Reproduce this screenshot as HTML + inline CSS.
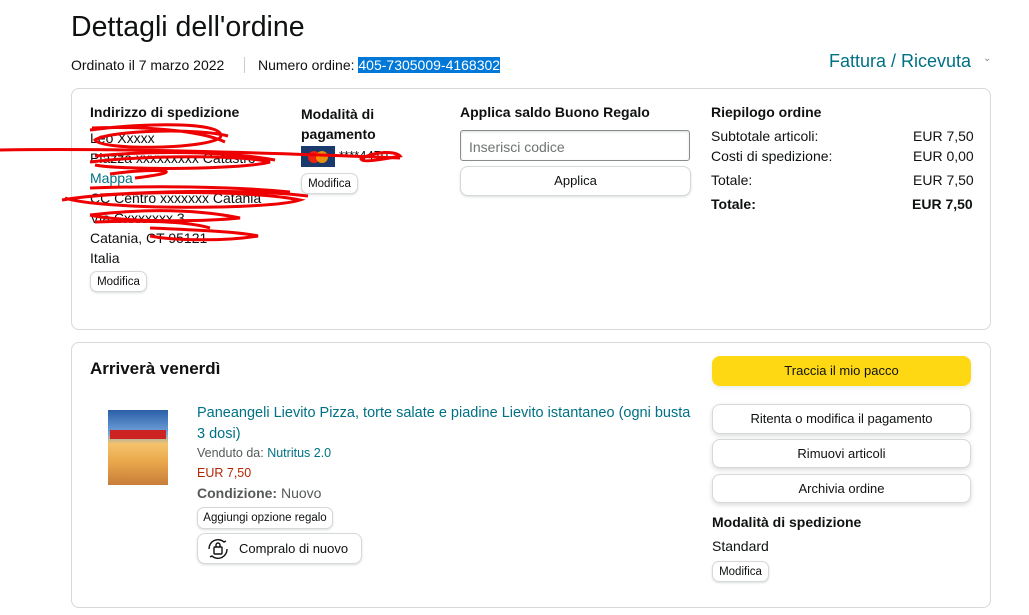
<!DOCTYPE html>
<html><head><meta charset="utf-8"><style>
*{margin:0;padding:0;box-sizing:border-box}
body{width:1029px;height:615px;background:#fff;font-family:"Liberation Sans",sans-serif;color:#0f1111;position:relative;overflow:hidden;font-size:14px}
.a{position:absolute;white-space:nowrap}
.b{font-weight:bold}
.box{position:absolute;border:1px solid #d5d9d9;border-radius:8px}
.btn{position:absolute;border:1px solid #d5d9d9;border-radius:7px;background:#fff;box-shadow:0 1px 2px rgba(15,17,17,.15);font-size:11.5px;text-align:center}
.bb{position:absolute;border:1px solid #d5d9d9;border-radius:8px;background:#fff;box-shadow:0 2px 5px rgba(15,17,17,.15);font-size:13px;text-align:center;line-height:27px;left:712px;width:259px}
.l{color:#007185}
</style></head><body>
<div class="a" style="left:71px;top:11px;font-size:28.5px">Dettagli dell'ordine</div>
<div class="a" style="left:71px;top:57px;font-size:14px">Ordinato il 7 marzo 2022</div>
<div class="a" style="left:244px;top:57px;width:1px;height:16px;background:#ccc"></div>
<div class="a" style="left:258px;top:57px;font-size:14px">Numero ordine: <span style="background:#0078d7;color:#fff">405-7305009-4168302</span></div>
<div class="a l" style="left:829px;top:51px;font-size:18px">Fattura / Ricevuta</div>
<div class="a" style="left:983px;top:53px;font-size:10px;color:#888">⌄</div>

<div class="box" style="left:71px;top:88px;width:920px;height:242px"></div>
<div class="a b" style="left:90px;top:104px">Indirizzo di spedizione</div>
<div class="a" style="left:90px;top:128px;line-height:20px">Leo Xxxxx<br>Piazza xxxxxxxxx Catastro<br><span class="l">Mappa</span><br>CC Centro xxxxxxx Catania<br>Via Cxxxxxxx 3<br>Catania, CT 95121<br>Italia</div>
<div class="btn" style="left:90px;top:271px;width:57px;height:21px;line-height:20px">Modifica</div>
<div class="a b" style="left:301px;top:104px;line-height:20px">Modalità di<br>pagamento</div>
<div class="a" style="left:301px;top:146px;width:34px;height:21px;background:#1a3a6e"><div style="position:absolute;left:7px;top:5px;width:12px;height:12px;border-radius:50%;background:#e21"></div><div style="position:absolute;left:15px;top:5px;width:12px;height:12px;border-radius:50%;background:#f90;opacity:.9"></div></div>
<div class="a" style="left:339px;top:148px;font-size:13px">****4470</div>
<div class="btn" style="left:301px;top:173px;width:57px;height:21px;line-height:20px">Modifica</div>
<div class="a b" style="left:460px;top:104px">Applica saldo Buono Regalo</div>
<div class="a" style="left:460px;top:130px;width:230px;height:31px;border:1px solid #888c8c;border-radius:3px;box-shadow:inset 0 1px 2px rgba(15,17,17,.15);color:#6f7373;padding:8px;font-size:14px">Inserisci codice</div>
<div class="btn" style="left:460px;top:166px;width:231px;height:30px;line-height:28px;font-size:13px;border-radius:8px">Applica</div>
<div class="a b" style="left:711px;top:104px">Riepilogo ordine</div>
<div class="a" style="left:711px;top:128px">Subtotale articoli:</div><div class="a" style="left:913px;top:128px">EUR 7,50</div>
<div class="a" style="left:711px;top:148px">Costi di spedizione:</div><div class="a" style="left:913px;top:148px">EUR 0,00</div>
<div class="a" style="left:711px;top:172px">Totale:</div><div class="a" style="left:913px;top:172px">EUR 7,50</div>
<div class="a b" style="left:711px;top:196px">Totale:</div><div class="a b" style="left:912px;top:196px">EUR 7,50</div>

<svg class="a" style="left:0;top:0" width="450" height="260" fill="none" stroke="#e00" stroke-width="3">
<path d="M90 130 C150 122 230 122 220 138 C200 150 100 150 95 140 C110 130 200 128 228 136 M92 128 C140 126 200 130 225 142"/>
<path d="M0 150 C100 148 250 152 400 158 M90 162 C150 155 240 155 270 162 C240 170 120 170 95 165 M95 156 C160 150 230 152 275 160"/>
<path d="M110 174 C150 168 200 170 135 178 M62 200 C120 190 250 190 300 200 C270 210 100 210 65 198 M100 195 C180 190 260 190 308 196 M90 188 C150 186 230 186 290 192"/>
<path d="M90 215 C150 208 200 210 240 218 C200 222 120 222 90 215 M95 222 C150 220 190 222 210 228 M150 228 C200 230 240 232 258 236 C220 242 170 240 150 236"/>
<path d="M360 160 C370 152 395 150 400 156 C380 160 365 162 362 160"/>
</svg>

<div class="box" style="left:71px;top:342px;width:920px;height:266px"></div>
<div class="a b" style="left:90px;top:359px;font-size:17px">Arriverà venerdì</div>
<div class="a" style="left:108px;top:410px;width:60px;height:75px;background:linear-gradient(#2a5fa8 0,#6fa0d8 30%,#f4c36b 45%,#e9a64a 70%,#c77d3a 100%)"><div style="position:absolute;left:2px;top:20px;width:56px;height:9px;background:#c22"></div></div>
<div class="a l" style="left:197px;top:403px;font-size:14.5px;line-height:21px;white-space:normal;width:500px">Paneangeli Lievito Pizza, torte salate e piadine Lievito istantaneo (ogni busta 3 dosi)</div>
<div class="a" style="left:197px;top:446px;font-size:12.5px;color:#565959">Venduto da: <span class="l">Nutritus 2.0</span></div>
<div class="a" style="left:197px;top:466px;font-size:12.5px;color:#b12704">EUR 7,50</div>
<div class="a" style="left:197px;top:485px;font-size:14px;color:#565959"><b>Condizione:</b> Nuovo</div>
<div class="btn" style="left:197px;top:507px;width:136px;height:22px;line-height:21px">Aggiungi opzione regalo</div>
<div class="btn" style="left:197px;top:533px;width:165px;height:31px;line-height:29px;font-size:13px;border-radius:8px;text-align:left;padding-left:41px">Compralo di nuovo</div>
<svg class="a" style="left:205px;top:537px" width="26" height="24" fill="none" stroke="#0f1111" stroke-width="1.4"><path d="M4 12a9 9 0 0 1 15-7l2-1M22 12a9 9 0 0 1-15 7l-2 1"/><rect x="9" y="10" width="8" height="7" rx="1"/><path d="M11 10V8a2 2 0 0 1 4 0v2"/></svg>

<div class="a" style="left:712px;top:356px;width:259px;height:30px;background:#ffd814;border-radius:8px;box-shadow:0 2px 5px rgba(213,217,217,.5);text-align:center;line-height:30px;font-size:13px">Traccia il mio pacco</div>
<div class="bb" style="top:404px;height:30px">Ritenta o modifica il pagamento</div>
<div class="bb" style="top:439px;height:29px">Rimuovi articoli</div>
<div class="bb" style="top:474px;height:29px">Archivia ordine</div>
<div class="a b" style="left:712px;top:514px">Modalità di spedizione</div>
<div class="a" style="left:712px;top:538px">Standard</div>
<div class="btn" style="left:712px;top:561px;width:57px;height:21px;line-height:20px">Modifica</div>
</body></html>
